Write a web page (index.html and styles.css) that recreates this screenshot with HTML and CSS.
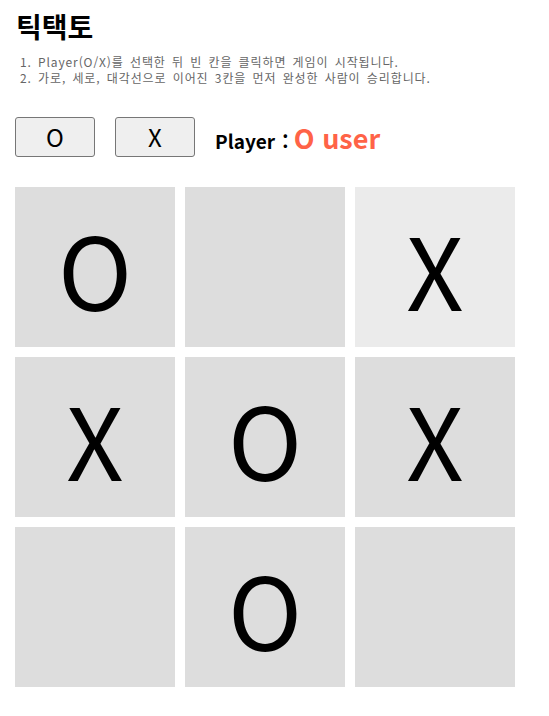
FILE: index.html
```html
<!DOCTYPE html>
<html lang="ko">
<head>
<meta charset="utf-8">
<title>틱택토</title>
<link rel="stylesheet" href="styles.css">
</head>
<body>
<div class="page">
  <h1 class="title">틱택토</h1>
  <ol class="rules">
    <li>Player(O/X)를 선택한 뒤 빈 칸을 클릭하면 게임이 시작됩니다.</li>
    <li>가로, 세로, 대각선으로 이어진 3칸을 먼저 완성한 사람이 승리합니다.</li>
  </ol>
  <div class="controls">
    <button class="pick">O</button>
    <button class="pick">X</button>
    <div class="player"><span class="player-label">Player :</span> <span class="player-value">O user</span></div>
  </div>
  <div class="board">
    <div class="cell">O</div>
    <div class="cell"></div>
    <div class="cell hover">X</div>
    <div class="cell">X</div>
    <div class="cell">O</div>
    <div class="cell">X</div>
    <div class="cell"></div>
    <div class="cell">O</div>
    <div class="cell"></div>
  </div>
</div>
</body>
</html>
```

FILE: styles.css
```css
html, body {
  margin: 0;
  padding: 0;
  background: #fff;
}
body {
  font-family: "Noto Sans CJK KR", "Open Sans", sans-serif;
  color: #000;
}
.page {
  padding: 4px 15px 0 15px;
}
.title {
  margin: 0;
  font-size: 28px;
  font-weight: 700;
  line-height: 44px;
  padding-left: 1px;
}
.rules {
  margin: 6px 0 0 0;
  padding-left: 23px;
  color: #666;
  font-size: 12px;
  line-height: 16px;
  letter-spacing: 0.9px;
  word-spacing: 2px;
}
.controls {
  display: flex;
  align-items: center;
  gap: 20px;
  margin-top: 31px;
  height: 40px;
}
.pick {
  width: 80px;
  height: 40px;
  margin: 0;
  padding: 0;
  border: 1px solid #767676;
  border-radius: 3px;
  background: #efefef;
  font-family: "Noto Sans CJK KR", "Open Sans", sans-serif;
  font-size: 24px;
  line-height: 1;
  color: #000;
}
.player {
  padding-top: 1px;
  white-space: nowrap;
  font-size: 19px;
  font-weight: 700;
}
.player-label {
  word-spacing: 2px;
}
.player-value {
  font-size: 27px;
  font-weight: 700;
  color: #ff6347;
}
.board {
  display: grid;
  grid-template-columns: repeat(3, 160px);
  grid-auto-rows: 160px;
  gap: 10px;
  margin-top: 30px;
}
.cell {
  background: #dddddd;
  display: flex;
  align-items: center;
  justify-content: center;
  font-family: "Noto Sans CJK KR", "Open Sans", sans-serif;
  font-size: 100px;
  line-height: 1;
  padding-top: 2px;
}
.cell.hover {
  background: #ebebeb;
}
```
